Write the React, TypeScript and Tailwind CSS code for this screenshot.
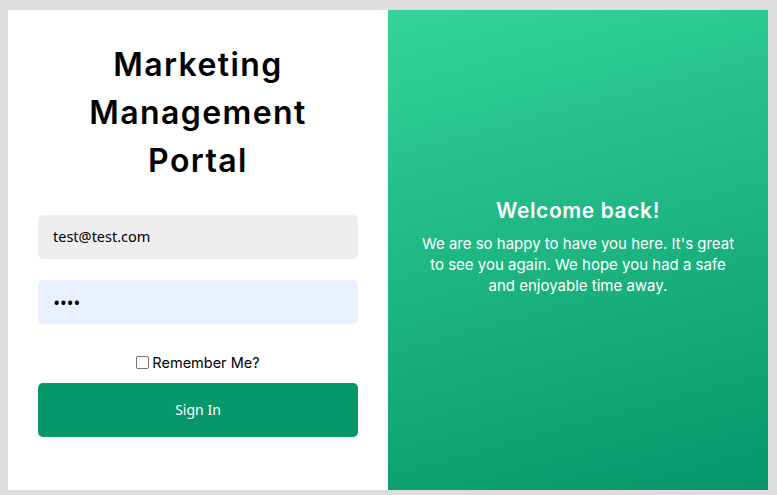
import React from "react";

export default function App() {
  return (
    <div className="min-h-[495px] w-[777px] bg-[#dddddd] pl-[8px] pt-[10px]">
      <div className="flex h-[480px] w-[760px]">
        <div className="flex w-[380px] flex-col bg-white px-[30px] pt-[31px]" style={{ fontFamily: "Inter, 'Noto Sans', sans-serif" }}>
          <h1 className="text-center text-[32px] font-semibold leading-[48px] tracking-[1.4px] text-black">
            Marketing
            <br />
            Management
            <br />
            Portal
          </h1>
          <div className="mt-[30px] flex h-[44px] items-center rounded-[5px] bg-[#eeeeee] px-[15px] text-[14.5px] text-black" style={{ fontFamily: "'Noto Sans', sans-serif" }}>
            test@test.com
          </div>
          <div className="mt-[21px] flex h-[44px] items-center rounded-[5px] bg-[#e8f0fe] px-[16px] text-[14px] font-bold text-black" style={{ fontFamily: "'Noto Sans', sans-serif" }}>
            <span className="tracking-[1.5px]">••••</span>
          </div>
          <div className="mt-[28px] flex items-center justify-center gap-[3px] text-[14.5px] text-black">
            <span className="inline-block h-[13px] w-[13px] rounded-[2px] border border-[#767676] bg-white" />
            <span>Remember Me?</span>
          </div>
          <div className="mt-[9px] flex h-[54px] items-center justify-center rounded-[5px] bg-[#06976a] text-[14px] text-white" style={{ fontFamily: "'Noto Sans', sans-serif" }}>
            Sign In
          </div>
        </div>
        <div className="flex w-[380px] flex-col items-center justify-center bg-[linear-gradient(165deg,#35d49a,#059669)] px-[30px] pb-[6px] text-white" style={{ fontFamily: "Inter, 'Noto Sans', sans-serif" }}>
          <h2 className="text-[21px] font-semibold leading-[24px] tracking-[0.6px]">Welcome back!</h2>
          <p className="mt-[10px] text-center text-[15px] leading-[21px]">
            We are so happy to have you here. It's great to see you again. We hope you had a safe and enjoyable time away.
          </p>
        </div>
      </div>
    </div>
  );
}
